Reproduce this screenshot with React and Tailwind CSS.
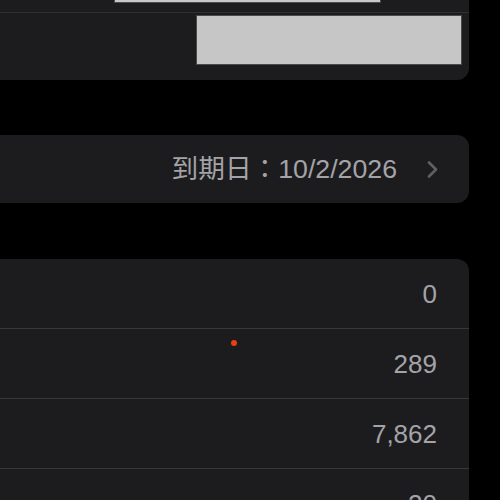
import React from 'react';

const rows = ['0', '289', '7,862', '20'];

const Chevron = () => (
  <svg width="11" height="17" viewBox="0 0 11 17" fill="none" aria-hidden="true">
    <path d="M2 1.5 L9 8.5 L2 15.5" stroke="#5f5f64" strokeWidth="2.6" strokeLinecap="round" strokeLinejoin="round" />
  </svg>
);

const App = () => {
  return (
    <div
      className="w-[500px] h-[500px] overflow-hidden bg-black relative"
      style={{ fontFamily: '"Liberation Sans", "Noto Sans CJK TC", sans-serif' }}
    >
      {/* top card, scrolled partly out of view */}
      <div className="w-[469px] h-[80px] bg-[#1c1c1e] rounded-br-[12px] flex flex-col">
        <div className="h-[12px] flex items-start">
          <div className="ml-[114px] w-[267px] h-[3px] bg-[#c8c8c8] border-b border-x border-[#4a4a4c]" />
        </div>
        <div className="flex-1 border-t border-[#303032]">
          <div className="ml-[196px] mt-[2px] w-[266px] h-[50px] bg-[#c6c6c6] border border-[#4a4a4c]" />
        </div>
      </div>

      {/* expiry card */}
      <div className="mt-[55px] w-[469px] h-[68px] bg-[#1c1c1e] rounded-r-[12px] flex items-center justify-end pr-[31px]">
        <span className="text-[26.7px] text-[#a3a3a8] leading-none">到期日：10/2/2026</span>
        <span className="ml-[30px] flex items-center">
          <Chevron />
        </span>
      </div>

      {/* stats card */}
      <div className="mt-[56px] w-[469px] bg-[#1c1c1e] rounded-tr-[12px]">
        {rows.map((value, i) => (
          <div
            key={i}
            className={`flex items-center justify-end pr-[32px] ${i > 0 ? 'h-[70px] border-t border-[#38383a]' : 'h-[69px]'}`}
          >
            <span className="text-[26px] text-[#a3a3a8] leading-none">{value}</span>
          </div>
        ))}
      </div>

      {/* stray red dot */}
      <div className="absolute left-[231px] top-[340px] w-[6px] h-[6px] rounded-full bg-[#e8400f]" />
    </div>
  );
};

export default App;
